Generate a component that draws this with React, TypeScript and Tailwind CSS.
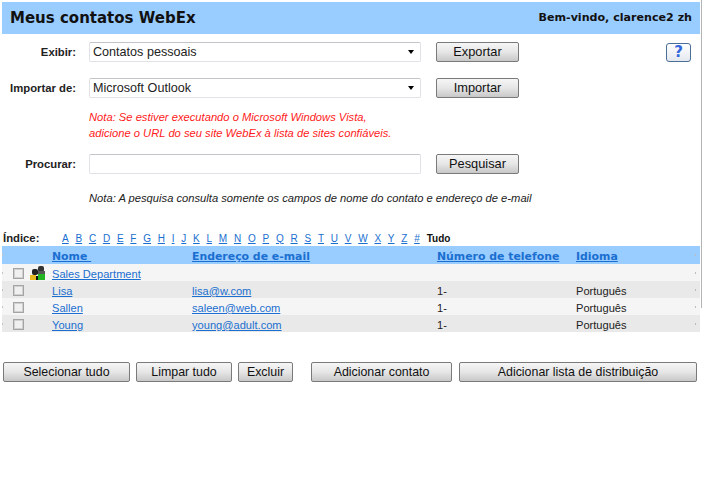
const letters = "ABCDEFGHIJKLMNOPQRSTUVWXYZ#".split("");

const contacts = [
  { name: "Lisa", email: "lisa@w.com" },
  { name: "Sallen", email: "saleen@web.com" },
  { name: "Young", email: "young@adult.com" },
];

const Btn = ({ label, className }: { label: string; className: string }) => (
  <button className={`h-[20px] rounded-[2px] border border-[#7a7a7a] bg-gradient-to-b from-[#f6f6f6] via-[#e6e6e6] to-[#c8c8c8] leading-[16px] text-[#111] ${className}`}>
    {label}
  </button>
);

const Select = ({ value }: { value: string }) => (
  <div className="flex h-[20px] w-[332px] items-center justify-between rounded-[2px] border border-[#e2e2e6] border-t-[#c4c4c8] bg-white pl-[3px] pr-[6px] text-[12.6px] text-[#222]">
    <span>{value}</span>
    <span className="h-0 w-0 border-x-[3px] border-t-[4px] border-x-transparent border-t-black" />
  </div>
);

const Label = ({ text }: { text: string }) => (
  <div className="w-[76px] text-right text-[11.3px] font-bold text-[#222]">{text}</div>
);

// little grey specks at both ends of every table row
const Dots = () => (
  <>
    <span className="absolute left-[0px] top-[8px] h-[2px] w-[1px] bg-[#c4c4c4]" />
    <span className="absolute right-[4px] top-[8px] h-[2px] w-[1px] bg-[#bbb]" />
  </>
);

const Check = () => (
  <span className="ml-[11px] block h-[11px] w-[11px] border border-[#a4a4a4] bg-[#f0f0f0] shadow-[inset_0_0_0_1px_#d0d0d0]" />
);

const GroupIcon = () => (
  <svg width="16" height="14" viewBox="0 0 16 14" className="ml-[6px] -mt-[1px]">
    <rect x="8" y="0" width="6" height="6" rx="2" fill="#333" />
    <rect x="7" y="5" width="8" height="3" fill="#555" />
    <rect x="2" y="3" width="6" height="6" rx="2" fill="#222" />
    <rect x="0" y="9" width="6" height="5" fill="#e8b820" />
    <rect x="8" y="8" width="7" height="6" fill="#22b422" />
    <rect x="6" y="10" width="2" height="4" fill="#111" />
  </svg>
);

export default function App() {
  return (
    <div className="relative h-[481px] w-[702px] overflow-hidden bg-white pt-[2px] font-['Liberation_Sans',Arial,sans-serif]">
      <div className="absolute right-0 top-0 h-[308px] w-[1px] bg-[#b4b4b4]" />

      <div className="mx-[2px] flex h-[32px] w-[698px] items-center justify-between bg-[#99ccff] pl-[8px] pr-[8px] font-['DejaVu_Sans',sans-serif] font-bold text-[#111]">
        <span className="text-[15px]">Meus contatos WebEx</span>
        <span className="text-[11.1px]">Bem-vindo, clarence2 zh</span>
      </div>

      <div className="mt-[8px] flex items-center">
        <Label text="Exibir:" />
        <div className="ml-[13px]"><Select value="Contatos pessoais" /></div>
        <Btn label="Exportar" className="ml-[15px] w-[83px] text-[12.8px]" />
        <div className="ml-[147px] flex h-[19px] w-[25px] items-center justify-center rounded-[3px] border border-[#4a6f96] bg-gradient-to-b from-white to-[#e4e8ee] font-['DejaVu_Sans',sans-serif] text-[15px] font-bold text-[#3366dd]">?</div>
      </div>

      <div className="mt-[16px] flex items-center">
        <Label text="Importar de:" />
        <div className="ml-[13px]"><Select value="Microsoft Outlook" /></div>
        <Btn label="Importar" className="ml-[15px] w-[83px] text-[12.8px]" />
      </div>

      <div className="ml-[89px] mt-[11px] text-[11.2px] italic leading-[16px] text-[#ff1a1a]">
        <div>Nota: Se estiver executando o Microsoft Windows Vista,</div>
        <div>adicione o URL do seu site WebEx à lista de sites confiáveis.</div>
      </div>

      <div className="mt-[13px] flex items-center">
        <Label text="Procurar:" />
        <div className="ml-[13px] h-[20px] w-[332px] rounded-[2px] border border-[#e2e2e6] border-t-[#c4c4c8] bg-white" />
        <Btn label="Pesquisar" className="ml-[15px] w-[83px] text-[12.8px]" />
      </div>

      <div className="ml-[89px] mt-[16px] text-[11.2px] italic leading-[16px] text-[#222]">
        Nota: A pesquisa consulta somente os campos de nome do contato e endereço de e-mail
      </div>

      <div className="mt-[24px] flex h-[16px] items-center pl-[3px]">
        <span className="w-[59px] text-[11.3px] font-bold text-[#222]">Índice:</span>
        <div className="flex gap-[6.78px] text-[10px] text-[#1a6fd0] underline">
          {letters.map((l) => (
            <span key={l}>{l}</span>
          ))}
        </div>
        <span className="ml-[7px] text-[10px] font-bold text-[#111]">Tudo</span>
      </div>

      <div className="relative mx-[2px] grid h-[18px] w-[698px] grid-cols-[50px_140px_245px_139px_1fr] items-center bg-[#99ccff] pt-[3px] font-['DejaVu_Sans',sans-serif] text-[10.9px] font-bold text-[#1a6fd0] underline">
        <span />
        <span>Nome&nbsp;</span>
        <span>Endereço de e-mail</span>
        <span>Número de telefone</span>
        <span>Idioma</span>
        <Dots />
      </div>

      <div className="relative mx-[2px] grid h-[17px] w-[698px] grid-cols-[50px_1fr] items-center bg-[#f5f5f5] text-[11.1px]">
        <div className="flex items-center"><Check /><GroupIcon /></div>
        <span className="pt-[2px] text-[#1a6fd0] underline">Sales Department</span>
        <Dots />
      </div>

      {contacts.map((c, i) => (
        <div
          key={c.name}
          className={`relative mx-[2px] grid h-[17px] w-[698px] grid-cols-[50px_140px_245px_139px_1fr] items-center text-[11.1px] text-[#222] ${i % 2 === 0 ? "bg-[#e9e9e9]" : "bg-[#f5f5f5]"}`}
        >
          <Check />
          <span className="pt-[2px] text-[#1a6fd0] underline">{c.name}</span>
          <span className="pt-[2px] text-[#1a6fd0] underline">{c.email}</span>
          <span className="pt-[2px]">1-</span>
          <span className="pt-[2px]">Português</span>
          <Dots />
        </div>
      ))}

      <div className="ml-[3px] mt-[30px] flex text-[12.4px]">
        <Btn label="Selecionar tudo" className="w-[127px]" />
        <Btn label="Limpar tudo" className="ml-[6px] w-[96px]" />
        <Btn label="Excluir" className="ml-[6px] w-[55px]" />
        <Btn label="Adicionar contato" className="ml-[18px] w-[141px]" />
        <Btn label="Adicionar lista de distribuição" className="ml-[7px] w-[238px]" />
      </div>
    </div>
  );
}
